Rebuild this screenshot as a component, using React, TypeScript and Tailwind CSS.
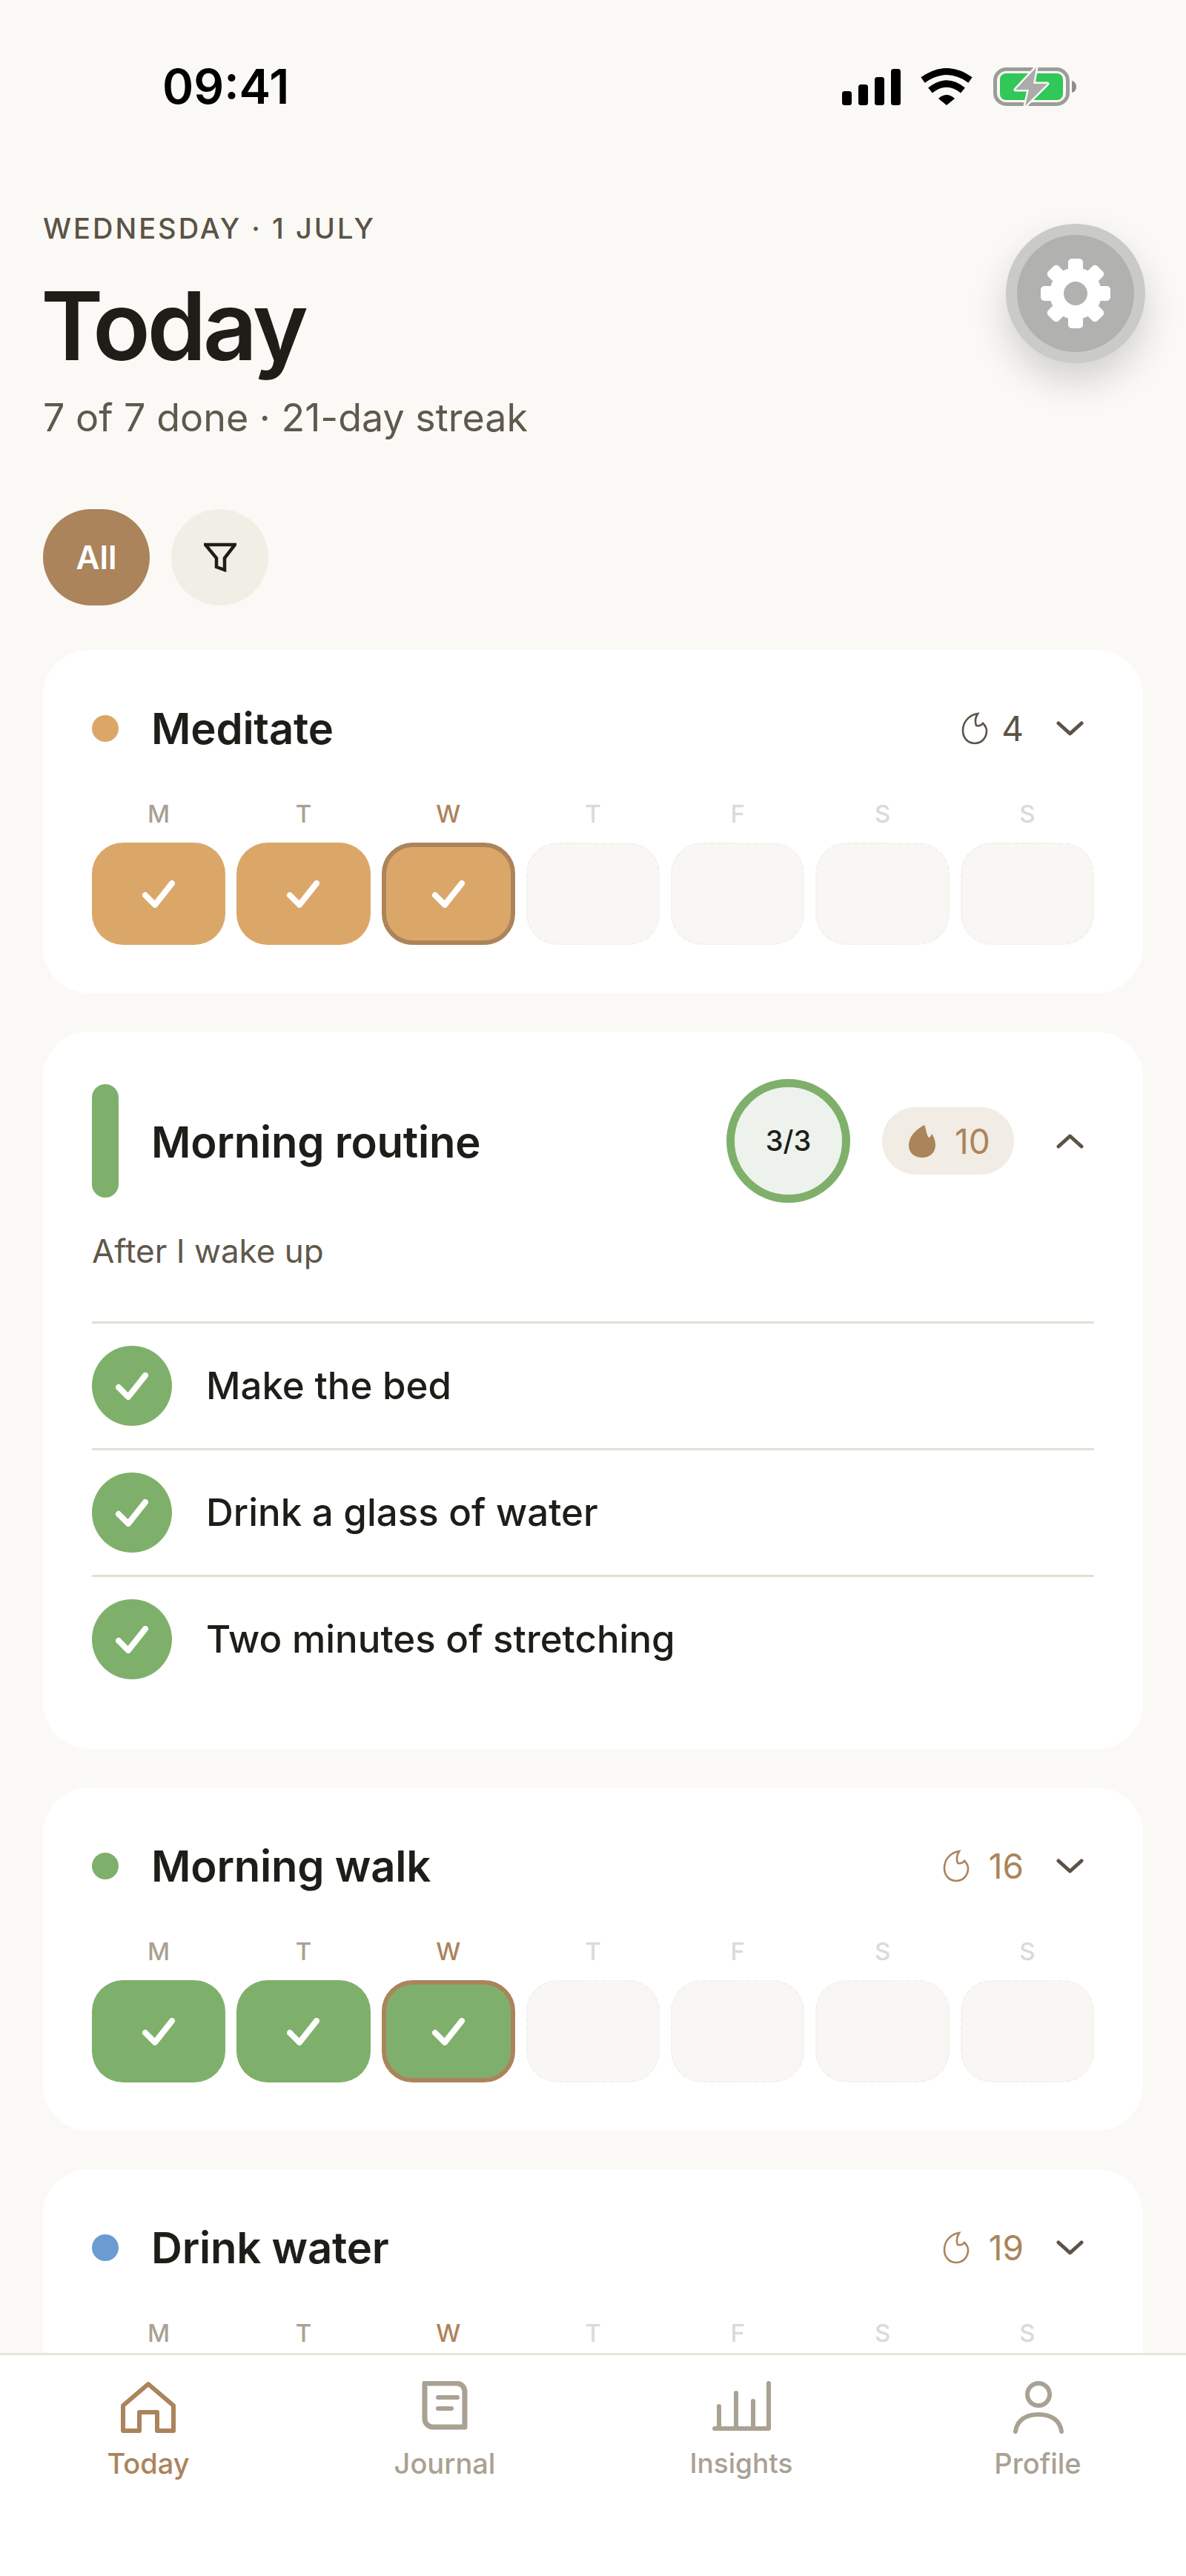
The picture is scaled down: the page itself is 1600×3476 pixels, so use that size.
const sans = "font-['Inter',sans-serif]";

const days = ['M', 'T', 'W', 'T', 'F', 'S', 'S'];

function Check() {
  return (
    <svg viewBox="0 0 44 37" className="w-[44px] h-[37px]" fill="none" stroke="#fff" strokeWidth="8" strokeLinecap="round" strokeLinejoin="round">
      <polyline points="4,20 17,33 40,4" />
    </svg>
  );
}

function Flame({ color }: { color: string }) {
  return (
    <svg viewBox="0 0 36 44" className="w-[36px] h-[44px]" fill="none" stroke={color} strokeWidth="2.6">
      <path d="M22 2C10 4 2 13 2 25C2 35 9 42 18 42C27 42 34 35 34 25C34 21 32 18 29 15C27 18 23 19 20 18C18 13 19 7 22 2Z" />
    </svg>
  );
}

function Chevron({ up }: { up?: boolean }) {
  return (
    <svg viewBox="0 0 37 20" className="w-[37px] h-[20px] mr-[14px]" fill="none" stroke="#5B5346" strokeWidth="5" strokeLinecap="round" strokeLinejoin="round">
      <polyline points={up ? '3,17 18.5,3 34,17' : '3,3 18.5,17 34,3'} />
    </svg>
  );
}

function HabitCard({ title, dot, streak, accent }: { title: string; dot: string; streak: number; accent: boolean }) {
  return (
    <div className="bg-white rounded-[62px] px-[66px] pt-[72px] pb-[65px]">
      <div className="flex items-center h-[68px]">
        <div className="w-[36px] h-[36px] rounded-full" style={{ backgroundColor: dot }} />
        <div className="ml-[44px] text-[58px] font-semibold text-[#1F1D18] tracking-[-0.2px]">{title}</div>
        <div className="ml-auto flex items-center">
          <Flame color={accent ? '#AB845B' : '#5B5346'} />
          <div className={`mr-[44px] text-[46px] leading-none ${streak < 10 ? 'ml-[18px]' : 'ml-[26px]'} ${accent ? 'text-[#AB845B]' : 'text-[#5B5346]'}`}>{streak}</div>
          <Chevron />
        </div>
      </div>
      <div className="grid grid-cols-7 gap-[15px] mt-[64px]">
        {days.map((d, i) => (
          <div key={i} className={`text-center text-[33px] leading-[34px] font-medium ${i === 2 ? 'text-[#AB845B]' : i < 2 ? 'text-[#A9A192]' : 'text-[#DCDAD5]'}`}>
            {d}
          </div>
        ))}
      </div>
      <div className="grid grid-cols-7 gap-[15px] mt-[22px]">
        {days.map((d, i) =>
          i < 3 ? (
            <div
              key={i}
              className={`h-[138px] rounded-[42px] flex items-center justify-center ${i === 2 ? 'border-[6px] border-[#AB845B]' : ''}`}
              style={{ backgroundColor: dot }}
            >
              <Check />
            </div>
          ) : (
            <div key={i} className="h-[138px] rounded-[42px] bg-[#F8F7F3] border-2 border-dashed border-[#F3F1EC]" />
          ),
        )}
      </div>
    </div>
  );
}

function RoutineCard() {
  const steps = ['Make the bed', 'Drink a glass of water', 'Two minutes of stretching'];
  return (
    <div className="bg-white rounded-[62px] px-[66px] pt-[64px] pb-[64px]">
      <div className="flex items-center">
        <div className="w-[36px] h-[153px] rounded-full bg-[#7FB06B]" />
        <div className="ml-[44px] pt-[3px] text-[58px] font-semibold text-[#1F1D18] tracking-[-0.2px]">Morning routine</div>
        <div className="ml-auto flex items-center">
          <div className="w-[167px] h-[167px] rounded-full border-[11px] border-[#7FB06B] bg-[#EDF3EC] flex items-center justify-center text-[38px] font-medium text-[#1F1D18]">
            3/3
          </div>
          <div className="ml-[43px] w-[178px] h-[91px] rounded-full bg-[#F1ECE4] flex items-center pl-[36px]">
            <svg viewBox="0 0 36 44" className="w-[36px] h-[44px]" fill="#AB845B">
              <path d="M21 0C24 6 23 12 27 17C29 17 30 14 31 12C34 16 36 22 36 27C36 37 29 44 18 44C7 44 0 37 0 28C0 15 10 6 21 0Z" />
            </svg>
            <div className="ml-[26px] text-[46px] leading-none text-[#AB845B]">10</div>
          </div>
          <div className="ml-[57px]">
            <Chevron up />
          </div>
        </div>
      </div>
      <div className="mt-[35px] text-[44px] leading-[60px] text-[#5F584C]">After I wake up</div>
      <div className="mt-[65px]">
        {steps.map((s) => (
          <div key={s} className="h-[171px] border-t-[3px] border-[#E4DFD4] flex items-center">
            <div className="w-[108px] h-[108px] rounded-full bg-[#7FB06B] flex items-center justify-center">
              <Check />
            </div>
            <div className="ml-[46px] text-[51px] font-medium text-[#1F1D18]">{s}</div>
          </div>
        ))}
      </div>
    </div>
  );
}

function StatusIcons() {
  return (
    <div className="flex items-center">
      <svg viewBox="0 0 79 49" className="w-[79px] h-[49px]" fill="#000">
        <rect x="0" y="30" width="13" height="19" rx="3.5" />
        <rect x="22" y="21" width="13" height="28" rx="3.5" />
        <rect x="44" y="11" width="13" height="38" rx="3.5" />
        <rect x="66" y="0" width="13" height="49" rx="3.5" />
      </svg>
      <svg viewBox="0 0 70 50" className="ml-[27px] w-[70px] h-[50px]">
        <path d="M3 16Q35 -7 67 16" fill="none" stroke="#000" strokeWidth="9" />
        <path d="M13 30Q35 12 57 30" fill="none" stroke="#000" strokeWidth="9" />
        <path d="M24 41Q35 31 46 41L35 50Z" fill="#000" />
      </svg>
      <svg viewBox="0 0 112 54" className="ml-[28px] w-[112px] h-[54px]">
        <rect x="2.5" y="3.5" width="98" height="47" rx="15" fill="none" stroke="#9C9C9A" strokeWidth="5" />
        <rect x="9" y="9" width="85" height="36" rx="8" fill="#31C759" />
        <path d="M106 19C110 20 112 23 112 27C112 31 110 34 106 35Z" fill="#8E8E8C" />
        <path d="M58 1L30 31H48L43 53L73 23H54Z" fill="#ABABA9" stroke="#FAF9F5" strokeWidth="5" paintOrder="stroke" strokeLinejoin="round" />
      </svg>
    </div>
  );
}

function Gear() {
  return (
    <svg viewBox="0 0 94 94" className="w-[94px] h-[94px]" fill="#fff">
      {[0, 45, 90, 135, 180, 225, 270, 315].map((a) => (
        <rect key={a} x="37" y="0" width="20" height="24" rx="5" transform={`rotate(${a} 47 47)`} />
      ))}
      <circle cx="47" cy="47" r="35" />
      <circle cx="47" cy="47" r="16" fill="#B1B1AF" />
    </svg>
  );
}

function NavBar() {
  const c = '#A9A192';
  return (
    <div className="shrink-0 h-[301px] bg-white border-t-[3px] border-[#EAE5DB] grid grid-cols-4 pt-[35px]">
      <div className="flex flex-col items-center">
        <svg viewBox="0 0 80 76" className="w-[80px] h-[76px]" fill="none" stroke="#AB845B" strokeWidth="6" strokeLinejoin="round">
          <path d="M6 33L40 4L74 33V67H52V42H28V67H6Z" />
        </svg>
        <div className="mt-[12px] text-[38px] leading-[46px] font-medium text-[#AB845B]">Today</div>
      </div>
      <div className="flex flex-col items-center">
        <svg viewBox="0 0 80 76" className="w-[80px] h-[76px]" fill="none" stroke={c} strokeLinecap="round">
          <path d="M13 3H56C62 3 67 8 67 14V62H24C18 62 13 57 13 51Z" strokeWidth="7" strokeLinejoin="round" />
          <path d="M31 22H57" strokeWidth="6" />
          <path d="M31 37H49" strokeWidth="6" />
        </svg>
        <div className="mt-[12px] text-[38px] leading-[46px] font-medium text-[#A9A192]">Journal</div>
      </div>
      <div className="flex flex-col items-center">
        <svg viewBox="0 0 80 76" className="w-[80px] h-[76px]" fill="none" stroke={c} strokeWidth="6" strokeLinecap="round" strokeLinejoin="round">
          <path d="M4 64H77V3" />
          <path d="M10 34V64M33 16V64M56 27V64" />
        </svg>
        <div className="mt-[12px] text-[37px] leading-[46px] font-medium text-[#A9A192]">Insights</div>
      </div>
      <div className="flex flex-col items-center">
        <svg viewBox="0 0 80 76" className="w-[80px] h-[76px]" fill="none" stroke={c} strokeWidth="6" strokeLinecap="round">
          <circle cx="41" cy="18" r="15" />
          <path d="M10 68C12 52 25 45 41 45C57 45 70 52 72 68" />
        </svg>
        <div className="mt-[12px] text-[38px] leading-[46px] font-medium text-[#A9A192]">Profile</div>
      </div>
    </div>
  );
}

export default function App() {
  return (
    <div className={`relative h-[3476px] w-[1600px] overflow-hidden bg-[#FAF9F5] flex flex-col ${sans}`}>
      <div className="flex-1 min-h-0 overflow-hidden">
        <div className="h-[234px] flex items-center justify-between pl-[219px] pr-[148px]">
          <div className="text-[64px] font-semibold text-black leading-none">09:41</div>
          <StatusIcons />
        </div>
        <div className="px-[58px]">
          <div className="mt-[49px] text-[38px] leading-[50px] font-medium tracking-[3px] text-[#5B5346]">WEDNESDAY · 1 JULY</div>
          <div className="mt-[37px] -ml-[3px] text-[128px] leading-[140px] font-semibold tracking-[-4.5px] text-[#1F1D18]">Today</div>
          <div className="mt-[24px] text-[52px] leading-[60px] text-[#5F584C]">7 of 7 done · 21-day streak</div>
          <div className="mt-[93px] flex gap-[29px]">
            <div className="w-[144px] h-[130px] rounded-full bg-[#AB845B] flex items-center justify-center text-[44px] font-semibold text-white">All</div>
            <div className="w-[131px] h-[130px] rounded-full bg-[#F1EEE6] flex items-center justify-center">
              <svg viewBox="0 0 44 40" className="w-[44px] h-[40px]" fill="none" stroke="#1F1D18" strokeWidth="4.5" strokeLinejoin="miter">
                <path d="M2 3H42L28 21V37L17 33V21Z" />
              </svg>
            </div>
          </div>
          <div className="mt-[60px] flex flex-col gap-[52px]">
            <HabitCard title="Meditate" dot="#DBA769" streak={4} accent={false} />
            <RoutineCard />
            <HabitCard title="Morning walk" dot="#7FB06B" streak={16} accent />
            <HabitCard title="Drink water" dot="#6C9BD2" streak={19} accent />
          </div>
        </div>
      </div>
      <NavBar />
      <div className="absolute left-[1357px] top-[302px] w-[188px] h-[188px] rounded-full border-[15px] border-[#CACAC6] bg-[#B1B1AF] shadow-[0_24px_50px_rgba(0,0,0,0.16)] flex items-center justify-center">
        <Gear />
      </div>
    </div>
  );
}
